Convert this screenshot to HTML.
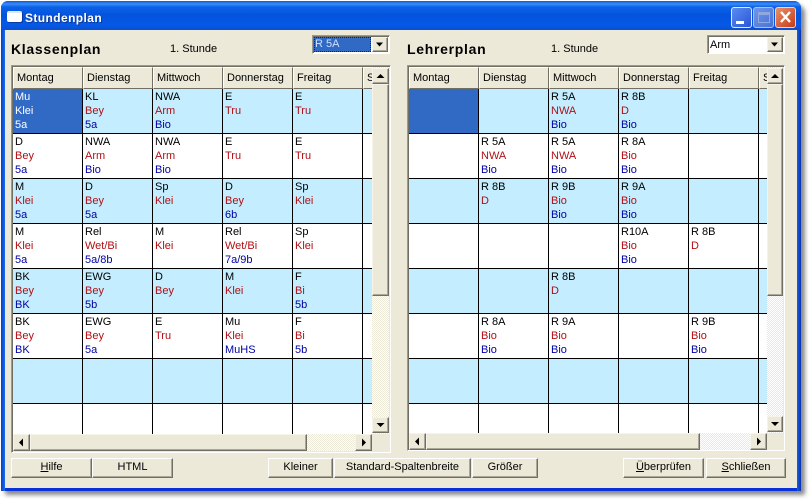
<!DOCTYPE html>
<html><head><meta charset="utf-8"><style>
html,body{margin:0;padding:0;background:#fff}
body{width:809px;height:499px;overflow:hidden;position:relative;font:11px/14px "Liberation Sans",sans-serif;color:#000}
div{box-sizing:border-box}
.a{position:absolute}
#shadow{left:5px;top:5px;width:800px;height:490px;background:#8a8a8a;border-radius:8px 8px 2px 2px;filter:blur(2px)}
#win{left:1px;top:1px;width:800px;height:490px;background:#0831d9;border-radius:7px 7px 0 0;overflow:hidden}
#tb{left:0;top:0;width:800px;height:29px;background:linear-gradient(180deg,#0a5ade 0,#3b8cf5 3px,#0b62e8 6px,#0453dd 14px,#0559e6 24px,#0a4fcf 29px)}
#ed{left:0;top:29px;width:4px;height:461px;background:linear-gradient(90deg,#0a3fc0,#1a6bf0)}
#ed2{right:0;top:29px;width:4px;height:461px;background:linear-gradient(270deg,#0a2fb0,#1560e0)}
#body{left:4px;top:29px;width:792px;height:458px;background:#ece9d8}
.t{font:bold 12px/16px "Liberation Sans",sans-serif;color:#fff;left:24px;top:9px;letter-spacing:.4px;text-shadow:1px 1px 0 #0a3aa0}
.h1{font:bold 14px/18px "Liberation Sans",sans-serif;letter-spacing:.7px}
.frame{background:#ece9d8;border:1px solid;border-color:#9c9a8c #fff #fff #9c9a8c;box-shadow:inset 1px 1px 0 #716f64}
.grid{overflow:hidden;background:#fff}
table{border-collapse:separate;border-spacing:0;table-layout:fixed;width:420px}
td{width:70px;height:45px;padding:1px 0 0 2px;vertical-align:top;border-right:1px solid #000;border-bottom:1px solid #000;box-sizing:border-box;white-space:nowrap;overflow:hidden}
th{width:70px;height:22px;padding:0 0 0 3px;font-weight:normal;text-align:left;background:#ece9d8;border:1px solid;border-color:#fff #716f64 #716f64 #fff;box-sizing:border-box;white-space:nowrap;overflow:hidden}
tr.c td{background:#c4eeff}
td.s{background:#316ac5!important;color:#fff}
td.s i{color:#fff}
i{font-style:normal;display:block}
.r{color:#b00f14}
.b{color:#0000a0}
.btn{background:#ece9d8;border:1px solid;border-color:#fff #716f64 #716f64 #fff;box-shadow:inset -1px -1px 0 #aca899;text-align:center;line-height:17px}
.btn u{text-decoration:underline}
.sb{background:#ece9d8;border:1px solid;border-color:#f5f3ea #716f64 #716f64 #f5f3ea;box-shadow:inset -1px -1px 0 #aca899}
.tr{background-color:#f6f4ec;background-image:conic-gradient(#ece9d8 25%,#fff 0 50%,#ece9d8 0 75%,#fff 0);background-size:2px 2px}
svg{position:absolute;display:block}
</style></head><body>
<div class="a" id="shadow"></div>
<div class="a" id="win">
<div class="a" id="tb"></div><div class="a" id="ed"></div><div class="a" id="ed2"></div>
<div class="a" id="body"></div>
<div class="a" style="left:6px;top:10px;width:15px;height:11px;background:#fff;border-top:2px solid #dfe8fb;border-radius:2px;box-shadow:1px 1px 0 #0a3aa0"></div>
<div class="a t">Stundenplan</div>
<div class="a" style="left:730px;top:6px;width:21px;height:21px;background:linear-gradient(135deg,#5a8cf0,#2a55d8);border:1px solid #dfe8fb;border-radius:3px"><div class="a" style="left:4px;top:13px;width:8px;height:3px;background:#fff"></div></div>
<div class="a" style="left:752px;top:6px;width:21px;height:21px;background:linear-gradient(135deg,#6f96e8,#4a72d8);border:1px solid #a8c0f0;border-radius:3px"><div class="a" style="left:4px;top:4px;width:12px;height:11px;border:1px solid #8fa8e0;border-top-width:3px"></div></div>
<div class="a" style="left:774px;top:6px;width:21px;height:21px;background:linear-gradient(135deg,#e8906a,#c63c18);border:1px solid #f0d8d0;border-radius:3px"><svg width="19" height="19" style="left:0;top:0"><path d="M5 4L14 14M14 4L5 14" stroke="#fff" stroke-width="2.4"/></svg></div>
</div>

<div class="a h1" style="left:11px;top:40px">Klassenplan</div>
<div class="a" style="left:170px;top:42px">1. Stunde</div>
<div class="a h1" style="left:407px;top:40px">Lehrerplan</div>
<div class="a" style="left:551px;top:42px">1. Stunde</div>

<!-- left combo -->
<div class="a frame" style="left:312px;top:35px;width:78px;height:19px;background:#fff"></div>
<div class="a" style="left:314px;top:37px;width:57px;height:15px;background:#316ac5;color:#cfe0ff;outline:1px dotted #222;outline-offset:-1px;padding-left:1px;line-height:14px">R 5A</div>
<div class="a sb" style="left:372px;top:37px;width:16px;height:15px"><svg width="14" height="13" style="left:0;top:0"><path d="M3 4.500H10L6.500 8.500Z" fill="#000"/></svg></div>
<!-- right combo -->
<div class="a frame" style="left:707px;top:35px;width:78px;height:19px;background:#fff"></div>
<div class="a" style="left:710px;top:38px">Arm</div>
<div class="a sb" style="left:767px;top:37px;width:16px;height:15px"><svg width="14" height="13" style="left:0;top:0"><path d="M3 4.500H10L6.500 8.500Z" fill="#000"/></svg></div>

<!-- left grid frame -->
<div class="a frame" style="left:11px;top:65px;width:380px;height:388px"></div>
<div class="a grid" style="left:13px;top:67px;width:359px;height:367px">
<table>
<tr><th>Montag</th><th>Dienstag</th><th>Mittwoch</th><th>Donnerstag</th><th>Freitag</th><th>Samstag</th></tr>
<tr class="c"><td class="s"><i>Mu</i><i>Klei</i><i>5a</i></td><td>KL<i class="r">Bey</i><i class="b">5a</i></td><td>NWA<i class="r">Arm</i><i class="b">Bio</i></td><td>E<i class="r">Tru</i></td><td>E<i class="r">Tru</i></td><td></td></tr>
<tr><td>D<i class="r">Bey</i><i class="b">5a</i></td><td>NWA<i class="r">Arm</i><i class="b">Bio</i></td><td>NWA<i class="r">Arm</i><i class="b">Bio</i></td><td>E<i class="r">Tru</i></td><td>E<i class="r">Tru</i></td><td></td></tr>
<tr class="c"><td>M<i class="r">Klei</i><i class="b">5a</i></td><td>D<i class="r">Bey</i><i class="b">5a</i></td><td>Sp<i class="r">Klei</i></td><td>D<i class="r">Bey</i><i class="b">6b</i></td><td>Sp<i class="r">Klei</i></td><td></td></tr>
<tr><td>M<i class="r">Klei</i><i class="b">5a</i></td><td>Rel<i class="r">Wet/Bi</i><i class="b">5a/8b</i></td><td>M<i class="r">Klei</i></td><td>Rel<i class="r">Wet/Bi</i><i class="b">7a/9b</i></td><td>Sp<i class="r">Klei</i></td><td></td></tr>
<tr class="c"><td>BK<i class="r">Bey</i><i class="b">BK</i></td><td>EWG<i class="r">Bey</i><i class="b">5b</i></td><td>D<i class="r">Bey</i></td><td>M<i class="r">Klei</i></td><td>F<i class="r">Bi</i><i class="b">5b</i></td><td></td></tr>
<tr><td>BK<i class="r">Bey</i><i class="b">BK</i></td><td>EWG<i class="r">Bey</i><i class="b">5a</i></td><td>E<i class="r">Tru</i></td><td>Mu<i class="r">Klei</i><i class="b">MuHS</i></td><td>F<i class="r">Bi</i><i class="b">5b</i></td><td></td></tr>
<tr class="c"><td></td><td></td><td></td><td></td><td></td><td></td></tr>
<tr><td></td><td></td><td></td><td></td><td></td><td></td></tr>
</table>
</div>
<!-- left v scroll -->
<div class="a tr" style="left:372px;top:67px;width:17px;height:367px"></div>
<div class="a sb" style="left:372px;top:68px;width:17px;height:16px"><svg width="15" height="14" style="left:0;top:0"><path d="M3.500 9H11.500L7.500 5Z" fill="#000"/></svg></div>
<div class="a sb" style="left:372px;top:84px;width:17px;height:212px"></div>
<div class="a sb" style="left:372px;top:417px;width:17px;height:16px"><svg width="15" height="14" style="left:0;top:0"><path d="M3.500 5H11.500L7.500 9Z" fill="#000"/></svg></div>
<!-- left h scroll -->
<div class="a tr" style="left:13px;top:434px;width:359px;height:17px"></div>
<div class="a sb" style="left:13px;top:434px;width:17px;height:17px"><svg width="15" height="15" style="left:0;top:0"><path d="M9 3.500V11.500L5 7.500Z" fill="#000"/></svg></div>
<div class="a sb" style="left:30px;top:434px;width:277px;height:17px"></div>
<div class="a sb" style="left:355px;top:434px;width:17px;height:17px"><svg width="15" height="15" style="left:0;top:0"><path d="M6 3.500V11.500L10 7.500Z" fill="#000"/></svg></div>

<!-- right grid frame -->
<div class="a frame" style="left:407px;top:65px;width:378px;height:386px"></div>
<div class="a grid" style="left:409px;top:67px;width:358px;height:366px">
<table>
<tr><th>Montag</th><th>Dienstag</th><th>Mittwoch</th><th>Donnerstag</th><th>Freitag</th><th>Samstag</th></tr>
<tr class="c"><td class="s" style="border-right-color:#000"></td><td></td><td>R 5A<i class="r">NWA</i><i class="b">Bio</i></td><td>R 8B<i class="r">D</i><i class="b">Bio</i></td><td></td><td></td></tr>
<tr><td></td><td>R 5A<i class="r">NWA</i><i class="b">Bio</i></td><td>R 5A<i class="r">NWA</i><i class="b">Bio</i></td><td>R 8A<i class="r">Bio</i><i class="b">Bio</i></td><td></td><td></td></tr>
<tr class="c"><td></td><td>R 8B<i class="r">D</i></td><td>R 9B<i class="r">Bio</i><i class="b">Bio</i></td><td>R 9A<i class="r">Bio</i><i class="b">Bio</i></td><td></td><td></td></tr>
<tr><td></td><td></td><td></td><td>R10A<i class="r">Bio</i><i class="b">Bio</i></td><td>R 8B<i class="r">D</i></td><td></td></tr>
<tr class="c"><td></td><td></td><td>R 8B<i class="r">D</i></td><td></td><td></td><td></td></tr>
<tr><td></td><td>R 8A<i class="r">Bio</i><i class="b">Bio</i></td><td>R 9A<i class="r">Bio</i><i class="b">Bio</i></td><td></td><td>R 9B<i class="r">Bio</i><i class="b">Bio</i></td><td></td></tr>
<tr class="c"><td></td><td></td><td></td><td></td><td></td><td></td></tr>
<tr><td></td><td></td><td></td><td></td><td></td><td></td></tr>
</table>
</div>
<!-- right v scroll -->
<div class="a tr" style="left:767px;top:67px;width:16px;height:366px"></div>
<div class="a sb" style="left:767px;top:68px;width:16px;height:16px"><svg width="14" height="14" style="left:0;top:0"><path d="M3 9H11L7 5Z" fill="#000"/></svg></div>
<div class="a sb" style="left:767px;top:84px;width:16px;height:212px"></div>
<div class="a sb" style="left:767px;top:416px;width:16px;height:16px"><svg width="14" height="14" style="left:0;top:0"><path d="M3 5H11L7 9Z" fill="#000"/></svg></div>
<!-- right h scroll -->
<div class="a tr" style="left:409px;top:433px;width:358px;height:17px"></div>
<div class="a sb" style="left:409px;top:433px;width:17px;height:17px"><svg width="15" height="15" style="left:0;top:0"><path d="M9 3.500V11.500L5 7.500Z" fill="#000"/></svg></div>
<div class="a sb" style="left:426px;top:433px;width:274px;height:17px"></div>
<div class="a sb" style="left:750px;top:433px;width:17px;height:17px"><svg width="15" height="15" style="left:0;top:0"><path d="M6 3.500V11.500L10 7.500Z" fill="#000"/></svg></div>

<!-- buttons -->
<div class="a btn" style="left:11px;top:458px;width:81px;height:20px"><u>H</u>ilfe</div>
<div class="a btn" style="left:92px;top:458px;width:81px;height:20px">HTML</div>
<div class="a btn" style="left:268px;top:458px;width:65px;height:20px">Kleiner</div>
<div class="a btn" style="left:334px;top:458px;width:137px;height:20px">Standard-Spaltenbreite</div>
<div class="a btn" style="left:472px;top:458px;width:66px;height:20px">Größer</div>
<div class="a btn" style="left:623px;top:458px;width:81px;height:20px"><u>Ü</u>berprüfen</div>
<div class="a btn" style="left:706px;top:458px;width:80px;height:20px"><u>S</u>chließen</div>
</body></html>
